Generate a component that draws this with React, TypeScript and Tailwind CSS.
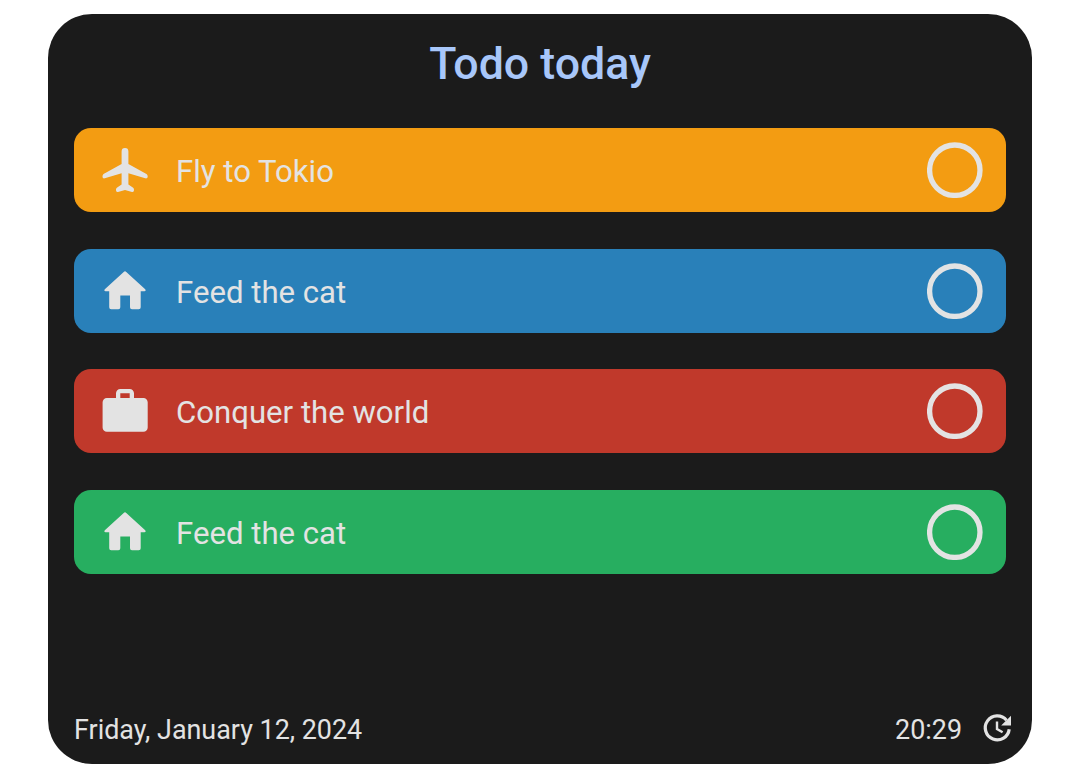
import React from "react";

const icons = {
  plane:
    "M21.600 6.400a3.400 3.400 0 0 1 6.800 0V18.900L46 28.700C47.300 29.500 47.700 30.300 47.700 31.500C47.700 32.900 46.600 33.700 45.200 33.300L28.400 28.300V39.600L32.800 42.400C33.700 43 34 43.700 34 45C34 46.500 33.200 47.200 32 46.900L25 45L18 46.900C16.800 47.200 16 46.500 16 45C16 43.700 16.300 43 17.200 42.400L21.600 39.600V28.300L4.800 33.300C3.400 33.700 2.500 32.900 2.500 31.500C2.500 30.300 2.900 29.500 4 28.700L21.600 18.900Z",
  home: "M23.700 5.900Q25 4.700 26.300 5.900L45.200 23.300Q46.300 25.200 44.500 25.200H40.700V41.200Q40.700 43.200 38.700 43.200H32Q30 43.200 30 41.200V29.500H20.300V41.200Q20.300 43.200 18.300 43.200H11.200Q9.200 43.200 9.200 41.200V25.200H5.500Q3.700 25.200 4.800 23.300Z",
  work: "M16 12V7.300A4.300 4.300 0 0 1 20.300 3H29.700A4.300 4.300 0 0 1 34 7.300V12H43.400A4.300 4.300 0 0 1 47.700 16.300V41.400A4.300 4.300 0 0 1 43.400 45.700H6.900A4.300 4.300 0 0 1 2.600 41.400V16.300A4.300 4.300 0 0 1 6.900 12ZM20.300 12H29.700V7.300H20.300Z",
};

const todos = [
  { icon: icons.plane, label: "Fly to Tokio", color: "bg-[#f39c12]" },
  { icon: icons.home, label: "Feed the cat", color: "bg-[#2980b9]" },
  { icon: icons.work, label: "Conquer the world", color: "bg-[#c0392b]" },
  { icon: icons.home, label: "Feed the cat", color: "bg-[#27ae60]" },
];

export default function App() {
  return (
    <div className="h-[778px] bg-white px-12 pt-[14px] pb-[14px] font-[Roboto,sans-serif] text-[#e3e3e3]">
      <main className="flex h-[750px] flex-col rounded-[44px] bg-[#1b1b1b] px-[26px]">
        <h1 className="mt-[22px] h-[56px] text-center text-[44.7px] leading-[56px] font-medium text-[#a8c7fa]">
          Todo today
        </h1>
        <ul className="mt-[36px] flex flex-col gap-[36.5px]">
          {todos.map((todo, i) => (
            <li key={i} className={`flex h-[84px] items-center rounded-[17px] pr-[23px] pl-[26px] ${todo.color}`}>
              <svg viewBox="0 0 50 50" className="size-[50px]" fill="currentColor" fillRule="evenodd">
                <path d={todo.icon} />
              </svg>
              <span className="ml-[26px] flex-1 pt-[5px] text-[31.15px]">{todo.label}</span>
              <button aria-label="Complete" className="size-14 rounded-full">
                <svg viewBox="0 0 56 56" className="size-14" fill="none" stroke="currentColor" strokeWidth="5.3">
                  <circle cx="27.800" cy="28.200" r="25.200" />
                </svg>
              </button>
            </li>
          ))}
        </ul>
        <footer className="mt-auto mb-[14px] flex h-10 items-center text-[26.9px]">
          <span className="flex-1">Friday, January 12, 2024</span>
          <span>20:29</span>
          <svg viewBox="0 0 34 34" className="-mr-[8px] mb-[5px] ml-[18px] size-[34px]" fill="none" stroke="currentColor">
            <path d="M26.500 9.200A12 12 0 1 0 29.200 18.200" strokeWidth="3.200" />
            <path d="M17 10.500V18L22.600 21.300" strokeWidth="2.400" />
            <path d="M31 4.800V14.600H21.200Z" fill="currentColor" stroke="none" />
          </svg>
        </footer>
      </main>
    </div>
  );
}
